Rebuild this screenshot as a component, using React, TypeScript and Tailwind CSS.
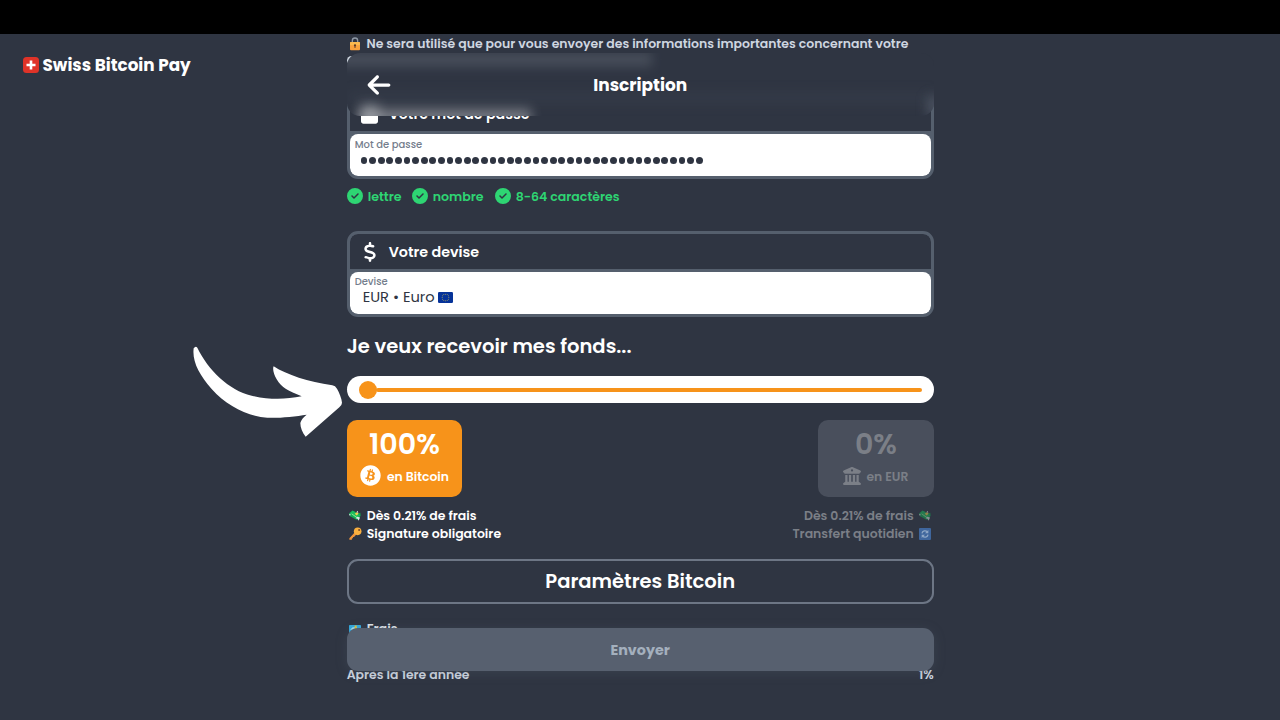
import { useLayoutEffect, useRef, useState } from "react";
import {
  FaArrowLeft,
  FaBitcoin,
  FaBuildingColumns,
  FaCircleCheck,
  FaDollarSign,
  FaLock,
} from "react-icons/fa6";

/* Single-line label whose type size is scaled so that it fills a given width. */
function Fit({ w, className = "", children }: { w: number; className?: string; children: string }) {
  const ref = useRef<HTMLSpanElement>(null);
  const [size, setSize] = useState<number | undefined>(undefined);
  useLayoutEffect(() => {
    const el = ref.current;
    if (el) {
      const base = parseFloat(getComputedStyle(el).fontSize);
      setSize((base * w) / el.getBoundingClientRect().width);
    }
  }, []);
  return (
    <span ref={ref} className={`inline-block whitespace-nowrap ${className}`} style={{ fontSize: size }}>
      {children}
    </span>
  );
}

function LockEmoji() {
  return (
    <svg viewBox="0 0 36 42" className="h-[14px] w-[12px] shrink-0">
      <path d="M10 18V11a8 8 0 0 1 16 0v7" fill="none" stroke="#8f99a6" strokeWidth="4" />
      <rect x="3" y="15" width="30" height="25" rx="3" fill="#f9a13c" />
      <rect x="3" y="15" width="30" height="10" rx="3" fill="#fbb94e" />
      <circle cx="18" cy="25" r="3.4" fill="#5b3b2a" />
      <path d="M16.6 26h2.8v7h-2.8z" fill="#5b3b2a" />
    </svg>
  );
}

function MoneyEmoji({ dim = false }: { dim?: boolean }) {
  return (
    <svg viewBox="0 0 36 36" className={dim ? "h-[13px] w-[12px] shrink-0 opacity-50" : "h-[13px] w-[12px] shrink-0"}>
      <path d="M0 12L10 3l6 2 10 8 8-3 1 9-9 12-5-1L3 20z" fill="#12a552" />
      <path d="M2 12l9-8 22 13-8 12z" fill="#1cbc5d" />
      <path d="M8 13l17 12" stroke="#8be58f" strokeWidth="3" />
      <path d="M17 13l7-5 5 4-6 6z" fill="#f2d14b" />
      <path d="M25 22l8 2-4 10-3-6-6-2z" fill="#dfe6ea" />
      <path d="M0 13l6 3-4 3z" fill="#dfe6ea" />
      <path d="M22 8l4-4 2 6z" fill="#dfe6ea" />
    </svg>
  );
}

function KeyEmoji() {
  return (
    <svg viewBox="0 0 36 36" className="h-[13px] w-[13px] shrink-0">
      <path d="M17 14L1 31v4h7v-4h3v-3h3l8-9z" fill="#f0943a" />
      <circle cx="24" cy="12" r="10.5" fill="#fbb03f" />
      <circle cx="28" cy="8" r="2.8" fill="#7c4a22" />
    </svg>
  );
}

function RefreshEmoji() {
  return (
    <svg viewBox="0 0 36 36" className="h-[12px] w-[12px] shrink-0">
      <rect width="36" height="36" rx="3" fill="#3f669d" />
      <path d="M9 16a9 9 0 0 1 16-4M27 20a9 9 0 0 1-16 4" fill="none" stroke="#8ca5c5" strokeWidth="4" />
      <path d="M28 6v10H18zM8 30V20h10z" fill="#8ca5c5" />
    </svg>
  );
}

function EuFlag() {
  const stars = Array.from({ length: 12 }, (_, i) => (i * Math.PI) / 6);
  return (
    <svg viewBox="0 0 45 33" className="ml-[3px] h-[11px] w-[15px] shrink-0">
      <rect width="45" height="33" rx="3.5" fill="#063399" />
      {stars.map((a) => (
        <circle key={a} cx={22.5 + 10 * Math.sin(a)} cy={16.5 + 10 * Math.cos(a)} r="1.5" fill="#a3a060" />
      ))}
    </svg>
  );
}

function TicketEmoji() {
  return (
    <svg viewBox="0 0 36 30" className="h-[8px] w-[12px] shrink-0" preserveAspectRatio="none">
      <rect width="36" height="30" rx="2" fill="#35a9dc" />
      <path d="M3 18l8-10h12v10z" fill="#a4dff2" />
      <path d="M17 2h6v14h-6z" fill="#e3c437" />
    </svg>
  );
}

function Rule({ w, gap, children }: { w: number; gap: string; children: string }) {
  return (
    <div className={`flex items-center ${gap}`}>
      <FaCircleCheck className="h-4 w-4 shrink-0" />
      <Fit w={w} className="ml-[5px] mt-[1px]">
        {children}
      </Fit>
    </div>
  );
}

const frame = "flex h-[86px] shrink-0 flex-col overflow-hidden rounded-[11px] border-[3px] border-[#555f6d] bg-[#555f6d]";

export default function App() {
  return (
    <div className="relative flex h-[720px] w-[1280px] flex-col overflow-hidden bg-[#2f3542] font-['Poppins','Inter',sans-serif] font-semibold text-white">
      <div className="h-[34px] shrink-0 bg-black" />
      <div className="flex grow">
        <aside className="w-[346.7px] shrink-0 pl-[23px] pt-[20px]">
          <div className="flex h-[22px] items-center">
            <svg viewBox="0 0 16 16" className="h-[16px] w-[16px]">
              <rect width="16" height="16" rx="3.5" fill="#df3328" />
              <path d="M6.7 3.5h2.6v3.2h3.2v2.6H9.3v3.2H6.7V9.3H3.5V6.7h3.2z" fill="#fff" />
            </svg>
            <Fit w={148.3} className="ml-[3.5px] mt-[2px] text-[17px] font-bold">
              Swiss Bitcoin Pay
            </Fit>
          </div>
        </aside>

        <main className="relative flex w-[587px] flex-col">
          <div className="flex h-[20px] shrink-0 items-center pl-[2px] text-[12.5px] text-[#ced6e0]">
            <LockEmoji />
            <Fit w={542} className="ml-[5.8px] mt-[1px]">
              Ne sera utilisé que pour vous envoyer des informations importantes concernant votre
            </Fit>
          </div>
          <div className="h-[39px] shrink-0 pt-[2px]">
            <div className="h-[9px] w-[20px] rounded-full bg-[#ced6e0]" />
          </div>

          <section className={frame}>
            <div className="flex h-[35px] items-center rounded-t-[8px] bg-[#2f3542] pl-[11.5px]">
              <div className="flex w-[17px] justify-center">
                <FaLock className="h-[20px] w-[18px]" />
              </div>
              <Fit w={141} className="ml-[10.5px] mt-[2px] text-[14.5px]">
                Votre mot de passe
              </Fit>
            </div>
            <div className="mt-[3px] flex h-[42px] flex-col rounded-[8px] bg-white pl-[5px] pt-[3px]">
              <Fit w={67.5} className="self-start text-[10.5px] font-medium leading-[15px] text-[#747d8c]">
                Mot de passe
              </Fit>
              <div className="flex h-[17px] items-center gap-[1.8px] pl-[6px]">
                {Array.from({ length: 40 }, (_, i) => (
                  <span key={i} className="h-[6.8px] w-[6.8px] rounded-full bg-[#2f3542]" />
                ))}
              </div>
            </div>
          </section>

          <div className="flex h-[52px] shrink-0 items-start pt-[7.5px] text-[13px] text-[#2ed573]">
            <Rule w={34} gap="w-[65px]">lettre</Rule>
            <Rule w={51} gap="w-[83px]">nombre</Rule>
            <Rule w={104} gap="">8-64 caractères</Rule>
          </div>

          <section className={frame}>
            <div className="flex h-[35px] items-center rounded-t-[8px] bg-[#2f3542] pl-[11.5px]">
              <div className="flex w-[17px] justify-center">
                <FaDollarSign className="h-[20px] w-[14px]" />
              </div>
              <Fit w={90.5} className="ml-[10.5px] mt-[2px] text-[14.5px]">
                Votre devise
              </Fit>
            </div>
            <div className="mt-[3px] flex h-[42px] flex-col rounded-[8px] bg-white pl-[5px] pt-[3px]">
              <Fit w={33} className="self-start text-[10.5px] font-medium leading-[14px] text-[#747d8c]">
                Devise
              </Fit>
              <div className="flex h-[16px] items-center pl-[8px] text-[13.5px] font-normal text-[#2f3542]">
                <Fit w={72}>EUR • Euro</Fit>
                <EuFlag />
              </div>
            </div>
          </section>

          <h2 className="flex h-[59px] shrink-0 items-center text-[20px]">
            <Fit w={285} className="mt-[1px]">Je veux recevoir mes fonds...</Fit>
          </h2>

          <div className="flex h-[27px] shrink-0 items-center rounded-full bg-white px-[12px]">
            <div className="h-[18px] w-[18px] shrink-0 rounded-full bg-[#f7931a]" />
            <div className="-ml-px h-[4px] grow rounded-full bg-[#f7931a]" />
          </div>

          <div className="mt-[17.4px] flex h-[77px] shrink-0 justify-between">
            <div className="flex w-[115.5px] flex-col items-center rounded-[10px] bg-[#f7931a] pt-[8px]">
              <Fit w={71} className="text-[29px] leading-[32px]">
                100%
              </Fit>
              <div className="mt-[5px] flex items-center text-[12.5px]">
                <FaBitcoin className="h-[21px] w-[21px]" />
                <Fit w={62} className="ml-[6px] mt-[2px]">
                  en Bitcoin
                </Fit>
              </div>
            </div>
            <div className="flex w-[115.5px] flex-col items-center rounded-[10px] bg-[#494f5c] pt-[8px] text-[#7b7f87]">
              <Fit w={42} className="text-[29px] leading-[32px]">
                0%
              </Fit>
              <div className="mt-[5px] flex h-[21px] items-center text-[12.5px]">
                <FaBuildingColumns className="h-[18px] w-[18px]" />
                <Fit w={42} className="ml-[5px] mt-[2px]">
                  en EUR
                </Fit>
              </div>
            </div>
          </div>

          <div className="mt-[8.6px] flex h-[37px] shrink-0 justify-between text-[12.5px] leading-[19px]">
            <div className="pl-[2px]">
              <div className="flex h-[18.5px] items-center gap-[6px]">
                <MoneyEmoji />
                <Fit w={110}>Dès 0.21% de frais</Fit>
              </div>
              <div className="flex h-[18.5px] items-center gap-[5px]">
                <KeyEmoji />
                <Fit w={134.5}>Signature obligatoire</Fit>
              </div>
            </div>
            <div className="flex flex-col items-end pr-[2.4px] text-[#7b7f87]">
              <div className="flex h-[18.5px] items-center gap-[5.5px]">
                <Fit w={110}>Dès 0.21% de frais</Fit>
                <MoneyEmoji dim />
              </div>
              <div className="flex h-[18.5px] items-center gap-[5.5px]">
                <Fit w={121.5}>Transfert quotidien</Fit>
                <RefreshEmoji />
              </div>
            </div>
          </div>

          <button className="mt-[16px] flex h-[45px] shrink-0 items-center justify-center rounded-[11px] border-2 border-[#6d7685] text-[20px]">
            <Fit w={190} className="mt-[1px]">Paramètres Bitcoin</Fit>
          </button>

          <div className="mt-[16px] flex h-[18px] shrink-0 items-center gap-[6px] pl-[2px] text-[12.5px] text-[#dfe4ea]">
            <TicketEmoji />
            <Fit w={31}>Frais</Fit>
          </div>
          <div className="mt-[28px] flex h-[18px] shrink-0 items-center justify-between text-[12.5px] text-[#ced6e0]">
            <Fit w={123}>Après la 1ère année</Fit>
            <Fit w={15}>1%</Fit>
          </div>

          <header className="absolute left-0 top-[19px] flex h-[63px] w-[587px] items-center justify-center overflow-hidden rounded-[13px] bg-[#2f3542]">
            <div className="absolute left-[-10px] top-[0px] h-[13px] w-[315px] bg-[#b4bcc8]/20 blur-[6px]" />
            <div className="absolute bottom-[-8px] left-[12px] h-[15px] w-[172px] bg-white/35 blur-[6px]" />
            <div className="absolute bottom-[-6px] left-[14px] h-[18px] w-[18px] bg-white/30 blur-[6px]" />
            <div className="absolute bottom-[0px] right-[-6px] h-[20px] w-[12px] bg-[#7c8696]/40 blur-[6px]" />
            <div className="absolute bottom-[14px] left-0 h-[8px] w-full bg-[#555f6d]/20 blur-[7px]" />
            <FaArrowLeft className="absolute left-[19px] h-[26px] w-[26px]" />
            <Fit w={94} className="relative mt-[2px] text-[17px] font-bold">
              Inscription
            </Fit>
          </header>

          <button className="absolute left-0 top-[594px] flex h-[42.5px] w-[587px] items-center justify-center rounded-[11px] bg-[#57606f] text-[14px] font-bold text-[#a4b0be] shadow-[0_2px_12px_rgba(87,96,111,0.28)]">
            <Fit w={59.5} className="mt-[2px]">Envoyer</Fit>
          </button>
        </main>
      </div>

      <svg viewBox="0 0 600 330" className="absolute left-[180px] top-[335px] h-[110px] w-[200px]">
        <path
          d="M41 40Q47 32 52 38C85 105 145 165 215 182C265 194 315 194 365 184C325 168 305 158 290 133C281 118 277 101 281 94C320 120 385 140 457 151Q466 152 471 161C478 173 485 190 486 203Q486 210 478 217L377 305C367 293 361 278 361 264C363 255 370 247 380 239C345 245 290 250 262 248C200 243 140 212 95 162C58 120 36 80 41 40Z"
          fill="#fff"
        />
      </svg>
    </div>
  );
}
